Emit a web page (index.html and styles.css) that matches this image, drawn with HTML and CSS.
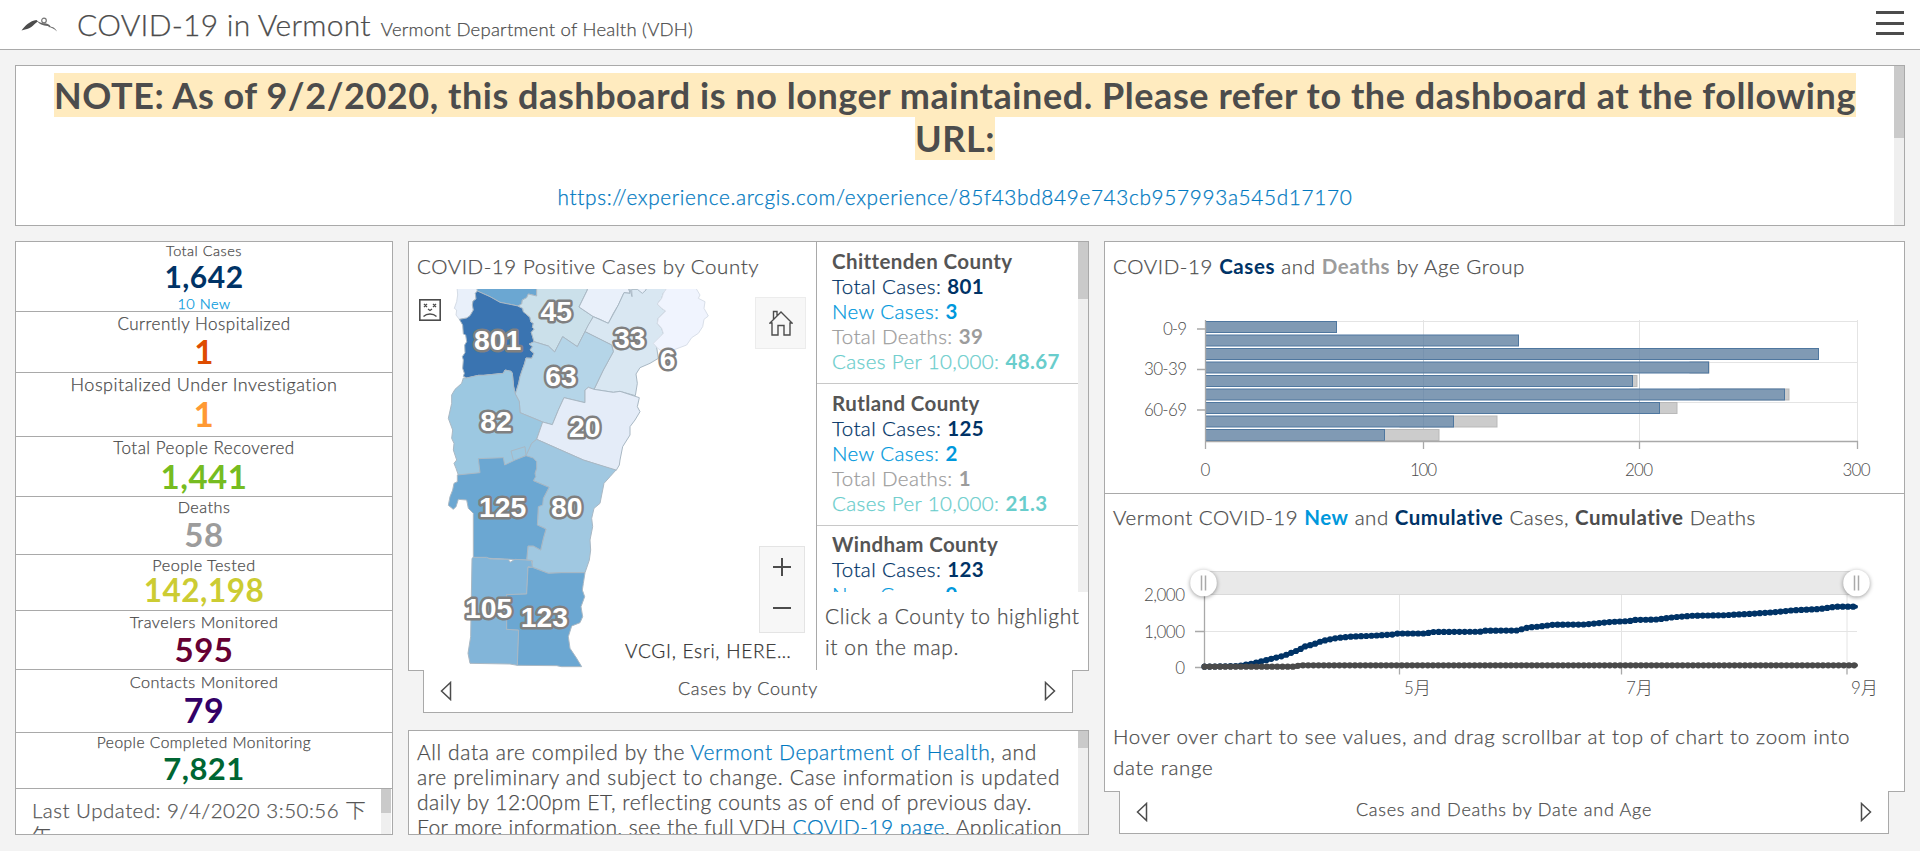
FILE: index.html
```html
<!DOCTYPE html>
<html lang="en">
<head>
<meta charset="utf-8">
<title>COVID-19 in Vermont</title>
<link rel="stylesheet" href="styles.css">
</head>
<body>
<header class="header">
  <svg class="logo" width="38" height="16" viewBox="0 0 38 16"><path d="M.5 13.500C4 8.500 9 4 15.500 3L17 4.500C14 6 10 12 4 12.500z" fill="#4c4c4c"/><path d="M15.500 3.500c6 4 8 1.500 13 4.500l1 1.500c4 1 5 2.500 6.500 5-3-3-6-4.500-9-4.500l1-1c-4 0-9-1-11.500-4.500z" fill="#666"/><circle cx="23" cy="3.500" r="2.300" fill="none" stroke="#777" stroke-width="1.200"/></svg>
  <h1 class="title">COVID-19 in Vermont</h1>
  <span class="subtitle">Vermont Department of Health (VDH)</span>
  <div class="menu"><i></i><i></i><i></i></div>
</header>
<main class="main">
  <section class="panel banner">
    <div class="banner-body">
      <div class="note"><span class="mark">NOTE: As of 9/2/2020, this dashboard is no longer maintained. Please refer to the dashboard at the following<br>URL:</span></div>
      <a class="link url">https://experience.arcgis.com/experience/85f43bd849e743cb957993a545d17170</a>
    </div>
    <div class="scroll"><i class="thumb thumb-banner"></i></div>
  </section>
  <div class="columns">
    <section class="panel stats">
      <div class="stat s-total"><span class="lab">Total Cases</span><b class="num">1,642</b><span class="new">10 New</span></div>
      <div class="stat s-hosp"><span class="lab">Currently Hospitalized</span><b class="num">1</b></div>
      <div class="stat s-inv"><span class="lab">Hospitalized Under Investigation</span><b class="num">1</b></div>
      <div class="stat s-rec"><span class="lab">Total People Recovered</span><b class="num">1,441</b></div>
      <div class="stat s-death"><span class="lab">Deaths</span><b class="num">58</b></div>
      <div class="stat s-test"><span class="lab">People Tested</span><b class="num">142,198</b></div>
      <div class="stat s-trav"><span class="lab">Travelers Monitored</span><b class="num">595</b></div>
      <div class="stat s-cont"><span class="lab">Contacts Monitored</span><b class="num">79</b></div>
      <div class="stat s-comp"><span class="lab">People Completed Monitoring</span><b class="num">7,821</b></div>
      <div class="updated"><p class="updated-text">Last Updated: 9/4/2020 3:50:56 下<br>午</p><div class="scroll"><i class="thumb thumb-updated"></i></div></div>
    </section>

    <div class="middle">
      <section class="panel county">
        <div class="map-side">
          <h2 class="heading h-map">COVID-19 Positive Cases by County</h2>
          <div class="map">
            <svg class="map-svg" width="407" height="381" viewBox="27 177 1221 1143">
              <g stroke="#a9b8c4" stroke-width="3" stroke-linejoin="round">
                <path fill="#e9f0fa" stroke="#d5dce6" d="M171 170L230 170 232 183 226 190 228 207 219 213 217 225 220 240 210 257 200 264 178 268 168 255 170 240 163 235 170 215 173 195Z"/>
                <path fill="#6ba7d2" d="M230 170L410 170 410 198 385 192 380 203 367 210 365 222 354 228 335 224 300 217 270 200 232 183Z"/>
                <path fill="#3a74b1" d="M232 183L270 200 300 217 335 224 354 228 368 235 370 245 390 262 392 275 400 280 397 292 403 297 394 307 398 320 402 335 388 342 398 350 390 360 402 370 395 385 378 384 374 400 366 422 360 440 356 460 346 492 341 470 337 430 333 424 315 420 310 430 250 436 235 436 200 444 190 439 193 430 188 415 190 390 187 380 195 368 194 345 200 335 197 315 190 312 188 285 178 268 200 264 210 257 220 240 217 225 219 213 228 207 226 190Z"/>
                <path fill="#cbe0ea" d="M410 170L562 170 562 180 537 231 580 260 555 305 532 350 488 320 464 366 445 348 402 335 394 307 403 297 397 292 400 280 392 275 390 262 370 245 368 235 354 228 365 222 367 210 380 203 385 192 410 198Z"/>
                <path fill="#e9f0fa" d="M562 170L685 170 690 190 672 188 655 225 640 250 625 280 600 268 580 260 537 231 562 180Z"/>
                <path fill="#d9e7f2" d="M685 170L803 170 798 180 790 190 785 205 772 222 785 235 797 243 775 265 772 280 785 295 790 310 765 340 770 352 775 385 750 400 720 413 708 432 712 460 706 497 660 484 640 487 582 478 610 420 640 365 635 345 555 305 565 285 580 260 625 280 655 225 672 188 690 190Z"/>
                <path fill="#e9f0fa" d="M688 170L696 200 695 178 712 178 727 190 738 180 738 170Z"/>
                <path fill="#f0f4fe" stroke="#d9dfe9" d="M803 170L885 170 900 195 895 205 915 215 912 235 925 258 912 268 908 290 895 310 875 323 860 345 820 360 795 372 770 352 760 340 790 310 785 295 772 280 775 265 797 243 785 235 772 222 785 205 790 190Z"/>
                <path fill="#b5d5e8" d="M402 335L445 348 464 366 488 320 532 350 555 305 635 345 640 365 610 420 582 478 565 472 555 480 555 518 492 503 475 540 457 584 428 576 360 548 358 515 346 492 356 460 360 440 366 422 374 400 378 384 395 385 402 370 390 360 398 350 388 342Z"/>
                <path fill="#9cc8e1" d="M190 444L200 444 235 436 250 436 310 430 315 420 333 424 337 430 341 470 346 492 358 515 360 548 428 576 410 628 395 640 383 672 340 700 240 735 175 735 168 715 162 700 170 690 160 660 162 640 155 625 158 600 145 565 155 520 155 495 165 478 185 460Z"/>
                <path fill="#e4ecf8" d="M492 503L555 518 555 480 565 472 582 478 640 487 660 484 718 503 712 530 720 545 705 570 690 590 690 615 668 650 660 690 658 705 648 722 550 690 410 628 428 576 457 584 475 540Z"/>
                <path fill="#a0c8e1" d="M410 628L550 690 648 720 630 740 612 760 605 795 600 820 582 835 575 865 578 890 570 930 572 960 568 990 555 1028 485 1028 445 1030 395 1010 398 992 380 990 384 948 400 948 422 960 430 925 438 897 412 885 415 830 430 805 447 772 400 752 410 710 378 677 395 640Z"/>
                <path fill="#6ba7d2" d="M235 686L310 683 314 705 345 690 378 677 400 684 410 695 410 715 405 730 407 740 400 752 447 772 430 805 428 825 415 830 412 885 438 897 430 925 422 960 400 948 384 948 380 990 330 988 270 985 220 982 220 850 205 835 200 810 175 808 168 830 160 838 145 826 150 800 158 780 162 760 172 755 172 735 240 728Z"/>
                <path fill="none" d="M375 650L333 663 340 690M375 650L378 677"/>
                <path fill="#82b5d9" d="M216 985L220 982 260 982 270 987 325 988 330 997 345 988 378 990 395 992 397 1012 384 1010 380 1092 320 1094 320 1198 356 1200 352 1306 330 1302 210 1300 204 1270 212 1220Z"/>
                <path fill="#6ba7d2" d="M384 1012L397 1012 445 1030 485 1028 555 1028 550 1060 547 1080 554 1100 543 1130 548 1160 540 1178 515 1188 505 1220 510 1255 530 1285 545 1310 485 1310 470 1307 352 1306 356 1200 320 1198 320 1094 380 1092Z"/>
              </g>
              <g class="count">
                <text x="469" y="273">45</text><text x="293" y="361">801</text><text x="689" y="354">33</text><text x="803" y="417">6</text><text x="483" y="469">63</text><text x="288" y="603">82</text><text x="554" y="622">20</text><text x="308" y="860">125</text><text x="500" y="860">80</text><text x="266" y="1165">105</text><text x="433" y="1192">123</text>
              </g>
            </svg>
            <svg class="sad" width="22" height="22" viewBox="0 0 22 22" fill="none" stroke="#4c4c4c"><rect x=".8" y=".8" width="20.4" height="20.4" stroke-width="1.600"/><path d="M5 5l3 3M8 5L5 8M14 5l3 3M17 5l-3 3M9 10l2 1.500 2-1.500M4.500 17.500c1.500-1.500 3-2.500 6.500-2.500s5 1 6.500 2.500" stroke-width="1.300"/></svg>
            <div class="home"><svg width="24" height="26" viewBox="0 0 24 26" fill="none" stroke="#4c4c4c" stroke-width="1.400"><path d="M1 13L12 2 23 13H21V25H15V15.500H9V25H3V13zM4.500 9.500V1.500H8V6"/></svg></div>
            <div class="zoomer"><svg width="46" height="86" viewBox="0 0 46 86" stroke="#4c4c4c" stroke-width="2"><path d="M14 21H32M23 12V30M14 62H32"/></svg></div>
            <div class="credit">VCGI, Esri, HERE…</div>
          </div>
        </div>
        <div class="list-side">
          <div class="list">
            <div class="items">
              <div class="item"><b class="name">Chittenden County</b><p class="navy">Total Cases: <b>801</b></p><p class="blue">New Cases: <b>3</b></p><p class="grey">Total Deaths: <b>39</b></p><p class="teal">Cases Per 10,000: <b>48.67</b></p></div>
              <div class="item"><b class="name">Rutland County</b><p class="navy">Total Cases: <b>125</b></p><p class="blue">New Cases: <b>2</b></p><p class="grey">Total Deaths: <b>1</b></p><p class="teal">Cases Per 10,000: <b>21.3</b></p></div>
              <div class="item"><b class="name">Windham County</b><p class="navy">Total Cases: <b>123</b></p><p class="blue">New Cases: <b>0</b></p></div>
            </div>
            <div class="scroll"><i class="thumb thumb-list"></i></div>
          </div>
          <p class="hint">Click a County to highlight<br>it on the map.</p>
        </div>
      </section>
      <nav class="tabs tabs-mid"><svg width="12" height="20" viewBox="0 0 12 20"><path class="arrow" d="M10.500 1.500L1.500 10l9 8.500z"/></svg><span class="tab-mid">Cases by County</span><svg width="12" height="20" viewBox="0 0 12 20"><path class="arrow" d="M1.500 1.500L10.500 10l-9 8.500z"/></svg></nav>
      <section class="panel info">
        <p class="info-text"><span class="i1">All data are compiled by the <a class="link">Vermont Department of Health</a>, and</span><br><span class="i2">are preliminary and subject to change. Case information is updated</span><br><span class="i3">daily by 12:00pm ET, reflecting counts as of end of previous day.</span><br><span class="i4">For more information, see the full VDH <a class="link">COVID-19 page</a>. Application</span></p>
        <div class="scroll"><i class="thumb thumb-info"></i></div>
      </section>
    </div>

    <div class="right">
      <section class="panel charts">
        <div class="chart-age">
          <h2 class="heading h-age">COVID-19 <b class="navy">Cases</b> and <b class="grey">Deaths</b> by Age Group</h2>
          <svg class="age-svg" width="799" height="190" viewBox="1105 303 799 190">
            <g fill="none" stroke="#e4e4e4"><path d="M1206 321.500H1857M1206 362.500H1857M1206 402.500H1857M1423.500 320V441M1639.500 320V441M1857.500 320V441"/></g>
            <g fill="#ccc" stroke="#b9b9b9"><rect x="1690" y="362" width="19" height="11"/><rect x="1600" y="375.500" width="37" height="11"/><rect x="1700" y="389" width="89" height="11"/><rect x="1600" y="402.500" width="77" height="11"/><rect x="1400" y="416" width="97" height="11"/><rect x="1300" y="429.500" width="139" height="11"/></g>
            <g fill="#809ab4" stroke="#4f779f"><rect x="1205.500" y="321.500" width="131" height="11"/><rect x="1205.500" y="335" width="313" height="11"/><rect x="1205.500" y="348.500" width="613" height="11"/><rect x="1205.500" y="362" width="503" height="11"/><rect x="1205.500" y="375.500" width="427" height="11"/><rect x="1205.500" y="389" width="579" height="11"/><rect x="1205.500" y="402.500" width="454" height="11"/><rect x="1205.500" y="416" width="248" height="11"/><rect x="1205.500" y="429.500" width="179" height="11"/></g>
            <path d="M1423.500 335V427M1639.500 348V414" stroke="#5e7f9f" stroke-opacity=".25"/>
            <path d="M1205.500 320V449M1197 329H1205M1197 369.500H1205M1197 410H1205M1205 441.500H1857.500V449M1423.500 441V449M1639.500 441V449" fill="none" stroke="#a9a9a9" stroke-width="1.300"/>
            <g class="axis"><text x="1187" y="335" text-anchor="end" textLength="24">0-9</text><text x="1187" y="375" text-anchor="end" textLength="43">30-39</text><text x="1187" y="416" text-anchor="end" textLength="43">60-69</text><g text-anchor="middle"><text x="1205.500" y="476">0</text><text x="1423.500" y="476" textLength="27">100</text><text x="1639" y="476" textLength="28">200</text><text x="1856.500" y="476" textLength="28">300</text></g></g>
          </svg>
        </div>
        <div class="chart-date">
          <h2 class="heading h-date">Vermont COVID-19 <b class="blue">New</b> and <b class="navy">Cumulative</b> Cases, <b>Cumulative</b> Deaths</h2>
          <svg class="date-svg" width="799" height="155" viewBox="1105 555 799 155">
            <rect x="1204" y="571" width="653" height="23" fill="#e9e9e9"/>
            <path d="M1204 571.500H1857M1204 594.500H1857" stroke="#dadada"/>
            <path d="M1204 631.500H1857M1399.500 595V668M1621.500 595V668M1847 595V668" stroke="#e4e4e4"/>
            <path d="M1204.500 590V668M1195 631.500H1204M1195 667.500H1204M1399.500 668V674.500M1621.500 668V674.500M1847 668V674.500" stroke="#a9a9a9" stroke-width="1.300"/>
            <g fill="none" stroke-linecap="round" stroke-linejoin="round">
              <path stroke="#036" stroke-width="4" d="M1204.500 666.700L1238 666 1253 663.500 1267 660 1273 658.300 1283 656 1300 649.500 1303 647 1313 644.500 1322 641 1337 638 1350 636.700 1373 635.700 1393 634.500 1398 633.500 1427 633.500 1431 632 1481 631.700 1485 630.700 1517 630.500 1528 627.500 1540 626.500 1553 624.700 1585 624.500 1610 622 1630 621 1634 620 1657 619.500 1673 617.300 1693 615.700 1723 615.300 1753 613.700 1777 612 1793 610.300 1820 609 1836 606.700 1856 606.700"/>
              <path stroke="#036" stroke-width="6.200" stroke-dasharray="0 5.200" d="M1204.500 666.700L1238 666 1253 663.500 1267 660 1273 658.300 1283 656 1300 649.500 1303 647 1313 644.500 1322 641 1337 638 1350 636.700 1373 635.700 1393 634.500 1398 633.500 1427 633.500 1431 632 1481 631.700 1485 630.700 1517 630.500 1528 627.500 1540 626.500 1553 624.700 1585 624.500 1610 622 1630 621 1634 620 1657 619.500 1673 617.300 1693 615.700 1723 615.300 1753 613.700 1777 612 1793 610.300 1820 609 1836 606.700 1856 606.700"/>
              <path stroke="#4a4a4a" stroke-width="4" d="M1204.500 666.700H1296L1299 665.300H1856"/>
              <path stroke="#4a4a4a" stroke-width="6.200" stroke-dasharray="0 5.200" d="M1204.500 666.700H1296L1299 665.300H1856"/>
            </g>
            <g class="handle"><circle cx="1203.500" cy="583" r="13.300"/><circle cx="1856.500" cy="583" r="13.300"/></g>
            <path d="M1201.500 575.500V590.500M1205.500 575.500V590.500M1854.500 575.500V590.500M1858.500 575.500V590.500" stroke="#aaa" stroke-width="1.500"/>
            <g class="axis"><text x="1185" y="601" text-anchor="end" textLength="41">2,000</text><text x="1185" y="638" text-anchor="end" textLength="41">1,000</text><text x="1185" y="674" text-anchor="end">0</text><text x="1404" y="694">5月</text><text x="1626" y="694">7月</text><text x="1851" y="694">9月</text></g>
          </svg>
          <p class="hover">Hover over chart to see values, and drag scrollbar at top of chart to zoom into<br>date range</p>
        </div>
      </section>
      <nav class="tabs tabs-right"><svg width="12" height="20" viewBox="0 0 12 20"><path class="arrow" d="M10.500 1.500L1.500 10l9 8.500z"/></svg><span class="tab-right">Cases and Deaths by Date and Age</span><svg width="12" height="20" viewBox="0 0 12 20"><path class="arrow" d="M1.500 1.500L10.500 10l-9 8.500z"/></svg></nav>
    </div>
  </div>
</main>
</body>
</html>
```
FILE: styles.css
```css
* { box-sizing: border-box; }
body {
  margin: 0; height: 851px; overflow: hidden; background: #f3f3f3; color: #4c4c4c;
  font-family: Lato, "Noto Sans CJK SC", sans-serif; font-weight: 300; font-size: 20.5px;
  -webkit-text-stroke: .25px;
  display: flex; flex-direction: column;
}
p, h1, h2 { margin: 0; font-weight: 300; }
b { font-weight: 700; -webkit-text-stroke: 0; }
span, a, b, p, h1, h2 { white-space: nowrap; }
.link { color: #0079c1; }
.navy { color: #036; }
.blue { color: #0098dc; }
.grey { color: #9c9c9c; }
.teal { color: #69cdcc; }

.header { height: 50px; flex: none; background: #fff; border-bottom: 1px solid #a9a9a9; display: flex; align-items: baseline; padding: 0 16px 0 21px; }
.logo { align-self: flex-start; margin-top: 17px; }
.title { font-size: 30px; line-height: 48px; margin-left: 18px; letter-spacing: .25px; }
.subtitle { font-size: 18.5px; margin-left: 10px; letter-spacing: .24px; }
.menu { margin-left: auto; align-self: flex-start; margin-top: 11px; width: 28px; display: flex; flex-direction: column; gap: 7.5px; }
.menu i { height: 3px; background: #4c4c4c; }

.main { flex: 1; padding: 15px 15px 16px; display: flex; flex-direction: column; gap: 15px; min-height: 0; }
.panel { background: #fff; border: 1px solid #a9a9a9; }
.scroll { width: 10px; background: #efefef; flex: none; }
.thumb { display: block; background: #cacaca; }
.thumb-banner { height: 72px; }
.thumb-updated { height: 24px; }
.thumb-list { height: 57px; }
.thumb-info { height: 17px; }

.banner { height: 161px; flex: none; display: flex; }
.banner-body { flex: 1; display: flex; flex-direction: column; align-items: center; padding-top: 8px; }
.note { font-size: 36px; line-height: 43px; font-weight: 700; text-align: center; letter-spacing: .55px; -webkit-text-stroke: 0; }
.mark { background: #ffebbf; }
.url { margin-top: 24px; line-height: 26px; letter-spacing: .65px; font-size: 20.8px; }

.columns { flex: 1; display: grid; grid-template-columns: 378px 681px 801px; gap: 15px; min-height: 0; }

.stats { display: flex; flex-direction: column; overflow: hidden; }
.stat { border-bottom: 1px solid #a9a9a9; display: flex; flex-direction: column; align-items: center; flex: none; letter-spacing: .5px; }
.num { font-size: 33px; line-height: 33px; margin-top: -2px; }
.s-total { height: 70px; }
.s-total .lab { font-size: 14.5px; line-height: 18px; }
.s-total .num { font-size: 30px; line-height: 35px; margin-top: -1px; color: #036; }
.new { font-size: 14.5px; line-height: 17px; margin-top: 1px; color: #0098dc; }
.s-hosp { height: 61px; }
.s-hosp .lab { font-size: 17px; line-height: 23px; }
.s-hosp .num { color: #de4c00; line-height: 37px; }
.s-inv { height: 64px; }
.s-inv .lab { font-size: 18px; line-height: 23px; }
.s-inv .num { color: #ff9933; font-size: 35px; line-height: 39px; }
.s-rec { height: 60px; }
.s-rec .lab { font-size: 17px; line-height: 22px; }
.s-rec .num { color: #76bc21; line-height: 38px; }
.s-death { height: 58px; }
.s-death .lab { font-size: 16.2px; line-height: 19px; }
.s-death .num { color: #9c9c9c; line-height: 40px; }
.s-test { height: 56px; }
.s-test .lab { font-size: 16.2px; line-height: 19px; }
.s-test .num { color: #cc3; font-size: 31.5px; line-height: 37px; }
.s-trav { height: 59px; }
.s-trav .lab { font-size: 16.2px; line-height: 21px; }
.s-trav .num { color: #603; line-height: 38px; }
.s-cont { height: 63px; }
.s-cont .lab { font-size: 16.2px; line-height: 23px; }
.s-cont .num { color: #306; font-size: 34px; line-height: 38px; }
.s-comp { height: 56px; }
.s-comp .lab { font-size: 15.5px; line-height: 19px; }
.s-comp .num { color: #063; font-size: 31px; line-height: 36px; }
.updated { flex: 1; display: flex; min-height: 0; overflow: hidden; padding-right: 1px; }
.updated-text { flex: 1; padding: 8px 0 0 16px; line-height: 26px; color: #555; letter-spacing: .5px; }

.middle, .right { display: flex; flex-direction: column; min-height: 0; }
.county { height: 430px; display: flex; flex: none; }
.map-side { width: 408px; border-right: 1px solid #a9a9a9; }
.heading { font-size: 20.5px; line-height: 24px; padding: 12px 0 0 8px; height: 47px; }
.h-map { letter-spacing: .57px; }
.h-age { letter-spacing: .6px; }
.h-date { letter-spacing: .52px; padding-top: 11px; }
.map { position: relative; }
.map-svg { display: block; }
.count { font: 700 85px "Liberation Sans", Arial, sans-serif; fill: #fff; stroke: #808080; -webkit-text-stroke: 15px #808080; stroke-width: 15px; stroke-linejoin: round; paint-order: stroke; text-anchor: middle; }
.sad { position: absolute; left: 10px; top: 10px; background: #fff; }
.home { position: absolute; left: 346px; top: 8px; width: 51px; height: 52px; border: 1px solid #ececec; background: #f7f7f7; display: flex; align-items: center; justify-content: center; }
.zoomer { position: absolute; left: 350px; top: 257px; width: 46px; height: 87px; border: 1px solid #e4e4e4; background: #f7f7f7; }
.zoomer svg { display: block; margin: -1px; }
.credit { position: absolute; left: 216px; top: 350px; font-size: 19px; line-height: 24px; color: #323232; letter-spacing: .75px; white-space: nowrap; }
.list-side { flex: 1; }
.list { height: 350px; overflow: hidden; display: flex; }
.items { flex: 1; }
.item { height: 142px; border-bottom: 1px solid #c8c8c8; padding: 7px 0 0 15px; line-height: 25px; letter-spacing: .4px; }
.item:nth-child(3) { padding-top: 6px; }
.name { display: block; color: #555; }
.item b { letter-spacing: .4px; }
.hint { padding: 8px 0 0 8px; font-size: 21px; line-height: 31px; letter-spacing: .6px; }

.tabs { background: #fff; border: 1px solid #a9a9a9; border-top: 0; height: 43px; margin: -1px 16px 0 15px; position: relative; display: flex; justify-content: space-between; align-items: center; padding: 0 16px; flex: none; font-size: 18px; }
.arrow { fill: none; stroke: #4c4c4c; stroke-width: 1.500; }
.tab-mid { margin-top: -6px; letter-spacing: .63px; }
.tab-right { margin-top: -6px; letter-spacing: .73px; }
.info { margin-top: 17px; flex: 1; display: flex; justify-content: space-between; overflow: hidden; min-height: 0; }
.info-text { padding: 8px 0 0 8px; font-size: 21px; line-height: 25px; }
.i1 { letter-spacing: .6px; }
.i2 { letter-spacing: .63px; }
.i3 { letter-spacing: .5px; }
.i4 { letter-spacing: .45px; }

.charts { height: 551px; flex: none; }
.chart-age { height: 252px; border-bottom: 1px solid #a9a9a9; }
.age-svg, .date-svg { display: block; }
.age-svg { margin-top: 14px; }
.date-svg { margin-top: 14px; }
.axis { font-size: 17px; fill: #4c4c4c; }
.handle { fill: #fff; filter: drop-shadow(0 1px 2px rgba(0, 0, 0, .4)); }
.hover { padding: 11px 0 0 8px; line-height: 31px; letter-spacing: .67px; }
```
